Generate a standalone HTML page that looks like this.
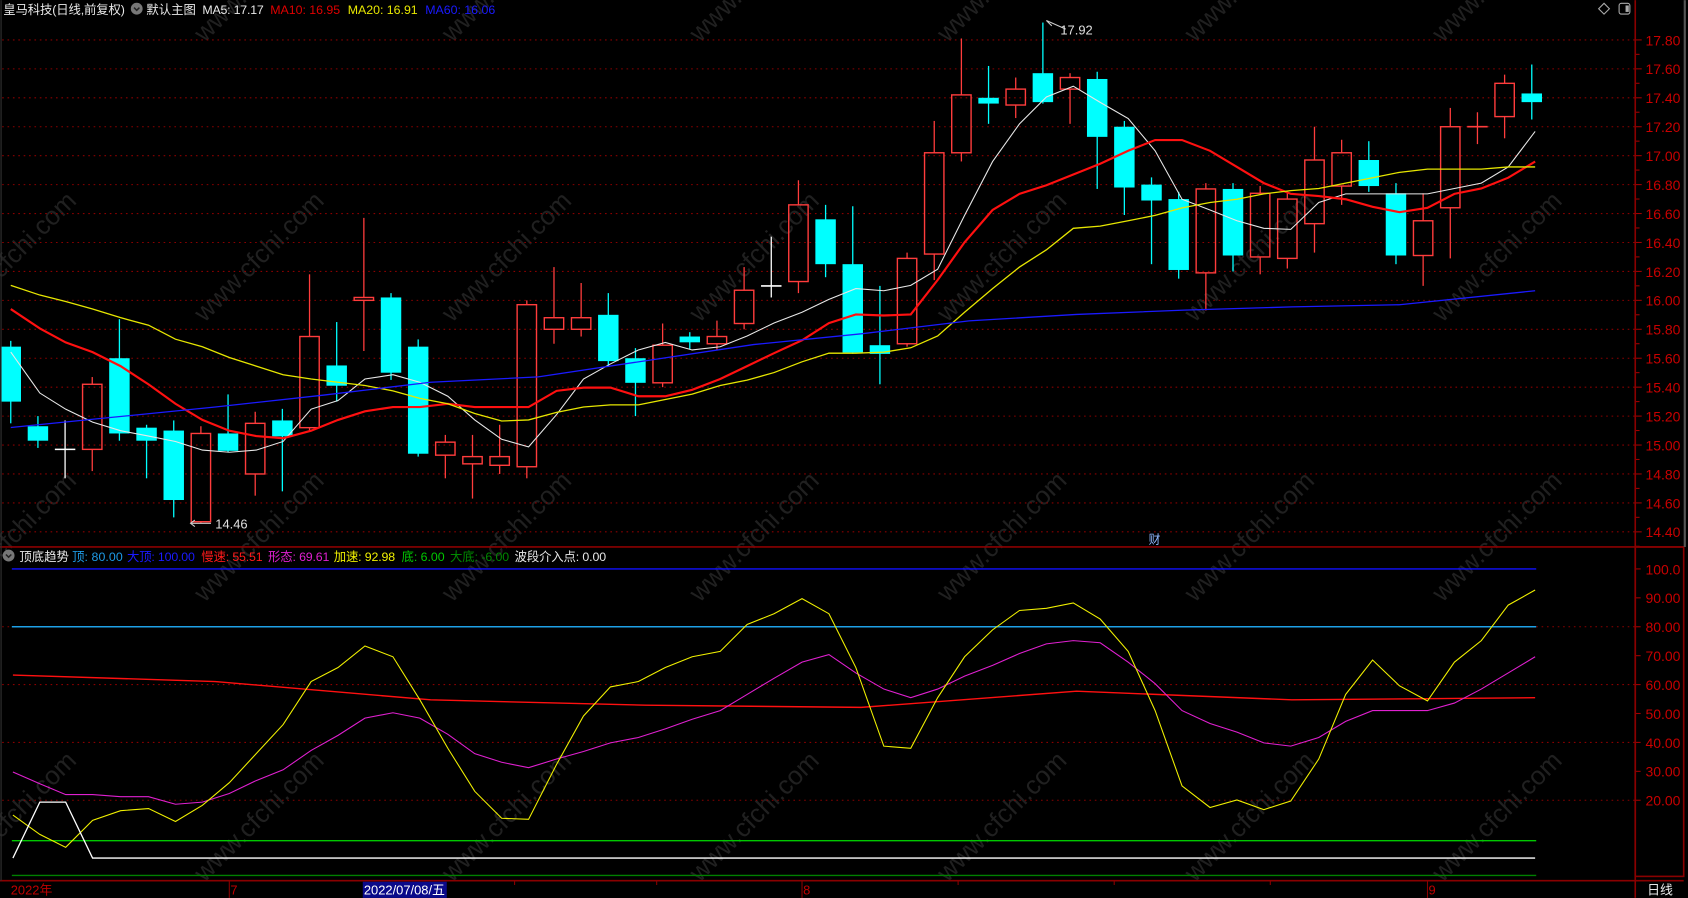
<!DOCTYPE html>
<html><head><meta charset="utf-8">
<style>
html,body{margin:0;padding:0;background:#000;overflow:hidden;width:1688px;height:898px}
svg text{font-family:"Liberation Sans","Noto Sans CJK SC",sans-serif}
</style></head>
<body>
<svg id="s" width="1688" height="898" viewBox="0 0 1568 834" xmlns="http://www.w3.org/2000/svg" style="display:block"></svg>
<script>
var s='';
function Y(p){return 37+(17.8-p)*134.4;}
function L(v){return 797-v*2.686;}
for(var wx=-40;wx<1560;wx+=230){for(var wy=40;wy<900;wy+=260){
 s+='<text x="'+wx+'" y="'+wy+'" fill="#202020" font-size="24" transform="rotate(-45 '+wx+' '+wy+')">www.cfchi.com</text>';}}
for(var i=0;i<18;i++){var p=17.8-i*0.2,y=Y(p);
 s+='<line x1="2" y1="'+y+'" x2="1519" y2="'+y+'" stroke="#8a0000" stroke-dasharray="1.5,3.5" stroke-width="1"/>';
 s+='<line x1="1519" y1="'+y+'" x2="1525" y2="'+y+'" stroke="#a00000"/>';
 s+='<line x1="1519" y1="'+(y+13.4)+'" x2="1523" y2="'+(y+13.4)+'" stroke="#a00000"/>';
 s+='<text x="1561" y="'+(y+5)+'" fill="#c80000" font-size="13" text-anchor="end">'+p.toFixed(2)+'</text>';}
[80,60,40,20].forEach(function(v){var y=L(v);
 s+='<line x1="2" y1="'+y+'" x2="1519" y2="'+y+'" stroke="#8a0000" stroke-dasharray="1.5,3.5"/>';});
[100,90,80,70,60,50,40,30,20].forEach(function(v){var y=L(v);
 s+='<line x1="1519" y1="'+y+'" x2="1524" y2="'+y+'" stroke="#a00000"/>';
 s+='<text x="1561" y="'+(y+5)+'" fill="#c80000" font-size="13" text-anchor="end">'+(v==100?'100.0':v.toFixed(2))+'</text>';});
var C=[[15.68,15.30,15.72,15.15],[15.13,15.03,15.20,14.98],[14.97,14.97,15.17,14.77,'w'],[14.97,15.42,15.47,14.82],[15.60,15.08,15.87,15.03],[15.12,15.03,15.14,14.77],[15.10,14.62,15.17,14.50],[14.47,15.08,15.13,14.46],[15.08,14.96,15.35,14.95],[14.80,15.15,15.23,14.65],[15.17,15.06,15.25,14.68],[15.12,15.75,16.18,15.10],[15.55,15.41,15.85,15.30],[16.00,16.02,16.57,15.65],[16.02,15.50,16.05,15.45],[15.68,14.94,15.73,14.92],[14.93,15.02,15.07,14.77],[14.87,14.92,15.07,14.63],[14.86,14.92,15.14,14.80],[14.85,15.97,16.00,14.77],[15.80,15.88,16.23,15.70],[15.80,15.88,16.12,15.75],[15.90,15.58,16.05,15.54],[15.60,15.43,15.67,15.20],[15.43,15.69,15.84,15.40],[15.75,15.71,15.78,15.66],[15.70,15.75,15.86,15.66],[15.84,16.07,16.23,15.80],[16.10,16.10,16.44,16.02,'w'],[16.13,16.66,16.83,16.05],[16.56,16.25,16.66,16.16],[16.25,15.64,16.65,15.63],[15.69,15.63,16.10,15.42],[15.70,16.29,16.33,15.68],[16.32,17.02,17.24,16.14],[17.02,17.42,17.81,16.96],[17.40,17.36,17.62,17.22],[17.35,17.46,17.54,17.26],[17.57,17.37,17.92,17.36],[17.46,17.54,17.57,17.22],[17.53,17.13,17.58,16.77],[17.20,16.78,17.24,16.59],[16.80,16.69,16.85,16.25],[16.70,16.21,16.75,16.15],[16.19,16.77,16.81,15.93],[16.77,16.31,16.81,16.20],[16.30,16.74,16.79,16.18],[16.29,16.70,16.74,16.22],[16.53,16.97,17.20,16.33],[16.79,17.02,17.11,16.66],[16.97,16.79,17.10,16.75],[16.74,16.31,16.81,16.25],[16.31,16.55,16.74,16.10],[16.64,17.20,17.33,16.29],[17.20,17.20,17.30,17.08,'r'],[17.27,17.50,17.56,17.12],[17.43,17.37,17.63,17.25]];
C.forEach(function(c,i){var x=10+i*25.23;var o=c[0],cl=c[1],h=c[2],l=c[3];
 var col=c[4]=='w'?'#ffffff':(c[4]=='r'?'#ff3c3c':(cl<o?'#00ffff':'#ff3c3c'));
 var top=Y(Math.max(o,cl)),bot=Y(Math.min(o,cl));
 if(cl<o&&!c[4]){s+='<line x1="'+x+'" y1="'+Y(h)+'" x2="'+x+'" y2="'+Y(l)+'" stroke="'+col+'" stroke-width="1.2"/>';
   s+='<rect x="'+(x-9.5)+'" y="'+top+'" width="19" height="'+Math.max(bot-top,3)+'" fill="'+col+'"/>';}
 else if(bot-top<2){s+='<line x1="'+x+'" y1="'+Y(h)+'" x2="'+x+'" y2="'+Y(l)+'" stroke="'+col+'" stroke-width="1.2"/>';
   s+='<line x1="'+(x-9.5)+'" y1="'+top+'" x2="'+(x+9.5)+'" y2="'+top+'" stroke="'+col+'" stroke-width="1.5"/>';}
 else{s+='<line x1="'+x+'" y1="'+Y(h)+'" x2="'+x+'" y2="'+top+'" stroke="'+col+'" stroke-width="1.2"/>';
   s+='<line x1="'+x+'" y1="'+bot+'" x2="'+x+'" y2="'+Y(l)+'" stroke="'+col+'" stroke-width="1.2"/>';
   s+='<rect x="'+(x-9)+'" y="'+top+'" width="18" height="'+(bot-top)+'" fill="none" stroke="'+col+'" stroke-width="1.3"/>';}
});
function pl(pts,col,w){s+='<polyline fill="none" stroke="'+col+'" stroke-width="'+(w||1)+'" points="'+pts+'"/>';}
pl("10,327 37,365 61,380 86,392 112,400 138,405 163,410 188,418 213,420 238,418 263,410 289,380 314,372 339,352 365,348 390,355 416,368 441,390 466,408 491,415 517,385 542,352 567,338 593,325 618,318 643,325 669,322 694,312 719,300 745,290 770,278 795,268 821,270 846,265 871,250 896,200 922,150 947,115 972,90 997,80 1022,95 1048,110 1073,140 1098,185 1124,195 1149,205 1174,212 1199,213 1225,188 1250,180 1275,180 1300,180 1326,180 1351,175 1376,170 1401,155 1426,122","#e8e8e8",1);
pl("10,287 37,305 61,318 86,327 112,340 138,357 163,375 188,390 213,400 238,405 263,407 289,400 314,390 339,382 365,378 390,378 416,375 441,378 466,378 491,378 517,363 542,360 567,360 593,368 618,368 643,362 669,352 694,340 719,328 745,316 770,300 795,292 821,293 846,292 871,260 896,225 922,195 947,180 972,172 997,162 1022,152 1048,140 1073,130 1098,130 1124,140 1149,155 1174,170 1199,180 1225,182 1250,185 1275,192 1300,197 1326,193 1351,180 1376,175 1401,165 1426,150","#ff1010",2);
pl("10,265 37,274 61,280 86,287 112,295 138,302 163,315 188,322 213,332 238,340 263,348 289,352 314,355 339,358 365,363 390,370 416,375 441,384 466,391 491,390 517,383 542,378 567,376 593,376 618,371 643,366 669,358 694,353 719,346 745,336 770,328 795,328 821,327 846,323 871,312 896,290 922,268 947,248 972,232 997,212 1022,210 1048,205 1073,200 1098,193 1124,188 1149,185 1174,180 1199,177 1225,175 1250,170 1275,165 1300,160 1326,157 1351,157 1376,157 1401,155 1426,155","#e6e600",1.2);
pl("10,397 100,388 200,378 300,367 400,355 500,350 600,335 700,320 800,310 900,298 1000,292 1100,288 1200,285 1300,283 1426,270","#1a1aff",1.2);
s+='<polyline points="977,24 972,19 990,27" fill="none" stroke="#ccc"/><text x="985" y="32" fill="#e0e0e0" font-size="12">17.92</text>';
s+='<line x1="177" y1="486" x2="196" y2="486" stroke="#ccc"/><polyline points="181,483 177,486 181,489" fill="none" stroke="#ccc"/><text x="200" y="491" fill="#e0e0e0" font-size="12">14.46</text>';
s+='<text x="1067" y="505" fill="#8fb8ff" font-size="11">财</text>';
s+='<line x1="11" y1="'+L(100)+'" x2="1427" y2="'+L(100)+'" stroke="#1010ff" stroke-width="1.3"/>';
s+='<line x1="11" y1="'+L(80)+'" x2="1427" y2="'+L(80)+'" stroke="#1ea0e6" stroke-width="1.3"/>';
s+='<line x1="11" y1="'+L(6)+'" x2="1427" y2="'+L(6)+'" stroke="#00c800" stroke-width="1.3"/>';
s+='<line x1="11" y1="'+L(-6)+'" x2="1427" y2="'+L(-6)+'" stroke="#008000" stroke-width="1.3"/>';
pl("12,627 200,633 400,650 600,655 800,657 1000,642 1200,650 1426,648","#ff1010",1.3);
pl("12,717 37,728 61,738 86,738 112,740 138,740 163,747 188,745 213,737 238,725 263,715 289,697 314,683 339,667 365,662 390,667 416,682 441,700 466,708 491,713 517,705 542,698 567,690 593,685 618,677 643,668 669,660 694,645 719,630 745,615 770,608 795,625 821,640 846,648 871,640 896,628 922,618 947,607 972,598 997,595 1022,597 1048,615 1073,635 1098,660 1124,672 1149,680 1174,690 1199,693 1225,685 1250,670 1275,660 1300,660 1326,660 1351,653 1376,640 1401,625 1426,610","#e020d0",1);
pl("12,757 37,775 61,787 86,762 112,753 138,751 163,763 188,748 213,727 238,700 263,673 289,633 314,620 339,600 365,610 390,650 416,695 441,735 466,760 491,761 517,710 542,665 567,638 593,633 618,620 643,610 669,605 694,580 719,570 745,556 770,570 795,620 821,693 846,695 871,648 896,610 922,585 947,567 972,565 997,560 1022,575 1048,605 1073,660 1098,730 1124,750 1149,743 1174,752 1199,744 1225,705 1250,645 1275,613 1300,637 1326,651 1351,615 1376,595 1401,562 1426,548","#f0f000",1);
pl("12,797 37,745 61,745 86,797 1426,797","#ffffff",1.2);
s+='<line x1="0" y1="508" x2="1564" y2="508" stroke="#8a0000" stroke-width="1.5"/>';
s+='<line x1="0" y1="818" x2="1564" y2="818" stroke="#8a0000" stroke-width="1.5"/>';
s+='<line x1="1519" y1="0" x2="1519" y2="834" stroke="#8a0000" stroke-width="1.5"/>';
s+='<rect x="1519" y="508" width="45" height="306" fill="none" stroke="#8a0000" stroke-width="1.5"/>';
s+='<line x1="1565" y1="0" x2="1565" y2="508" stroke="#555" stroke-width="2"/>';
s+='<line x1="1" y1="0" x2="1" y2="818" stroke="#333"/>';
s+='<rect x="337" y="819" width="78" height="15" fill="#0a0a8a"/>';
s+='<text x="10" y="831" fill="#c00000" font-size="12">2022年</text>';
s+='<line x1="213" y1="818" x2="213" y2="834" stroke="#8a0000"/><text x="214" y="831" fill="#c00000" font-size="12">7</text>';
s+='<text x="338" y="831" fill="#ffffff" font-size="12">2022/07/08/五</text>';
s+='<line x1="745" y1="818" x2="745" y2="834" stroke="#8a0000"/><text x="746" y="831" fill="#c00000" font-size="12">8</text>';
s+='<line x1="1326" y1="818" x2="1326" y2="834" stroke="#8a0000"/><text x="1327" y="831" fill="#c00000" font-size="12">9</text>';
[478,610,890,1035,1180].forEach(function(x){s+='<line x1="'+x+'" y1="818" x2="'+x+'" y2="822" stroke="#8a0000"/>';});
s+='<text x="1530" y="831" fill="#e8e8e8" font-size="12">日线</text>';
s+='<text x="3" y="13" fill="#e8e8e8" font-size="11.5" textLength="113">皇马科技(日线,前复权)</text>';
s+='<circle cx="127" cy="8" r="5.5" fill="#777"/><path d="M124.5 7 L127 9.5 L129.5 7" stroke="#222" fill="none" stroke-width="1.4"/>';
s+='<text x="136" y="13" fill="#e8e8e8" font-size="11.5">默认主图</text>';
s+='<text x="188" y="13" fill="#e8e8e8" font-size="11.5" textLength="57">MA5: 17.17</text>';
s+='<text x="251" y="13" fill="#e00000" font-size="11.5" textLength="65">MA10: 16.95</text>';
s+='<text x="323" y="13" fill="#e8e800" font-size="11.5" textLength="65">MA20: 16.91</text>';
s+='<text x="395" y="13" fill="#1a1aff" font-size="11.5" textLength="65">MA60: 16.06</text>';
s+='<path d="M1490 3 L1495 8 L1490 13 L1485 8 Z" fill="none" stroke="#aaa"/>';
s+='<rect x="1504" y="3" width="10" height="10" rx="2" fill="none" stroke="#aaa"/><rect x="1510" y="5" width="3" height="6" fill="#aaa"/>';
s+='<circle cx="8" cy="516" r="5.5" fill="#777"/><path d="M5.5 515 L8 517.5 L10.5 515" stroke="#222" fill="none" stroke-width="1.4"/>';
var H=[[18,'顶底趋势','#e8e8e8',46],[67,'顶: 80.00','#1e9be6',47],[118,'大顶: 100.00','#1a1aff',63],[187,'慢速: 55.51','#ff1a1a',57],[249,'形态: 69.61','#e020d0',57],[310,'加速: 92.98','#f0f000',57],[373,'底: 6.00','#00c800',40],[418,'大底: -6.00','#008800',55],[478,'波段介入点: 0.00','#e8e8e8',85]];
H.forEach(function(h){s+='<text x="'+h[0]+'" y="521" fill="'+h[2]+'" font-size="11.5" textLength="'+h[3]+'">'+h[1]+'</text>';});
document.getElementById('s').innerHTML=s;
</script>
</body></html>
